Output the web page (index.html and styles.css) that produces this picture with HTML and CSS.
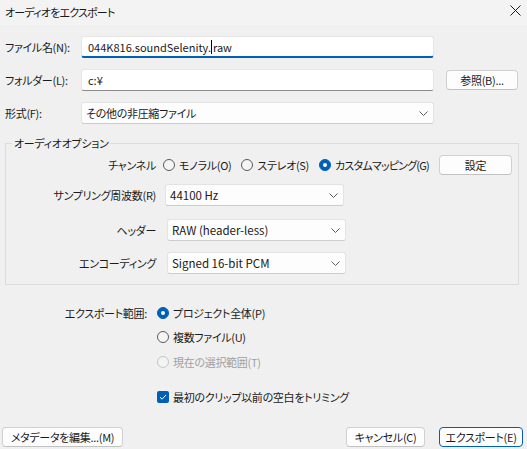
FILE: index.html
```html
<!DOCTYPE html>
<html lang="ja">
<head>
<meta charset="utf-8">
<title>オーディオをエクスポート</title>
<link rel="stylesheet" href="styles.css">
</head>
<body>
<div class="titlebar">
  <span class="title">オーディオをエクスポート</span>
  <svg class="close" width="11" height="11" viewBox="0 0 11 11"><path d="M0.5 0.5 L10.5 10.5 M10.5 0.5 L0.5 10.5" stroke="#1a1a1a" stroke-width="1" fill="none"/></svg>
</div>
<div class="main">
  <div class="row">
    <span class="lbl">ファイル名(N):</span>
    <div class="input focus">044K816.soundSelenity.<span class="caret"></span>raw</div>
  </div>
  <div class="row">
    <span class="lbl">フォルダー(L):</span>
    <div class="input">c:¥</div>
    <div class="btn browse">参照(B)...</div>
  </div>
  <div class="row">
    <span class="lbl">形式(F):</span>
    <div class="select wide"><span>その他の非圧縮ファイル</span><svg class="chev" width="9" height="5" viewBox="0 0 9 5"><path d="M0.5 0.5 L4.5 4.5 L8.5 0.5" stroke="#5c5c5c" fill="none"/></svg></div>
  </div>

  <fieldset class="group">
    <legend>オーディオオプション</legend>
    <div class="frow channel">
      <span class="flbl">チャンネル</span>
      <div class="radios">
        <span class="ritem"><span class="radio"></span>モノラル(O)</span>
        <span class="ritem"><span class="radio"></span>ステレオ(S)</span>
        <span class="ritem custom"><span class="radio on"></span>カスタムマッピング(G)</span>
      </div>
      <div class="btn settings">設定</div>
    </div>
    <div class="frow sr">
      <span class="flbl">サンプリング周波数(R)</span>
      <div class="select mid"><span class="val">44100 Hz</span><svg class="chev" width="9" height="5" viewBox="0 0 9 5"><path d="M0.5 0.5 L4.5 4.5 L8.5 0.5" stroke="#5c5c5c" fill="none"/></svg></div>
    </div>
    <div class="frow hd">
      <span class="flbl">ヘッダー</span>
      <div class="select mid"><span class="val">RAW (header-less)</span><svg class="chev" width="9" height="5" viewBox="0 0 9 5"><path d="M0.5 0.5 L4.5 4.5 L8.5 0.5" stroke="#5c5c5c" fill="none"/></svg></div>
    </div>
    <div class="frow enc">
      <span class="flbl">エンコーディング</span>
      <div class="select mid"><span class="val">Signed 16-bit PCM</span><svg class="chev" width="9" height="5" viewBox="0 0 9 5"><path d="M0.5 0.5 L4.5 4.5 L8.5 0.5" stroke="#5c5c5c" fill="none"/></svg></div>
    </div>
  </fieldset>

  <div class="export">
    <span class="elbl">エクスポート範囲:</span>
    <div class="eitems">
      <span class="ritem e1"><span class="radio on"></span>プロジェクト全体(P)</span>
      <span class="ritem e2"><span class="radio"></span>複数ファイル(U)</span>
      <span class="ritem e3 disabled"><span class="radio"></span>現在の選択範囲(T)</span>
      <span class="ritem e4"><span class="check"><svg width="12" height="12" viewBox="0 0 12 12"><path d="M3 6.2 L5.1 8.2 L9 4" stroke="#fff" stroke-width="1" fill="none"/></svg></span>最初のクリップ以前の空白をトリミング</span>
    </div>
  </div>
</div>
<div class="footer">
  <div class="btn meta">メタデータを編集...(M)</div>
  <div class="btn cancel">キャンセル(C)</div>
  <div class="btn export-btn">エクスポート(E)</div>
</div>
</body>
</html>
```

FILE: styles.css
```css
* { box-sizing: border-box; }
html, body { margin: 0; padding: 0; }
body {
  width: 527px;
  height: 449px;
  overflow: hidden;
  background: #f0f0f0;
  font-family: "Noto Sans CJK JP", sans-serif;
  font-size: 11px;
  line-height: 16px;
  letter-spacing: -0.3px;
  color: #1a1a1a;
  font-feature-settings: "palt";
}
.titlebar {
  height: 25px;
  background: #f3f3f3;
  display: flex;
  align-items: center;
  justify-content: space-between;
  padding: 0 6px 2px 5px;
}
.title { letter-spacing: -0.8px; }
.close { display: block; margin-top: -2px; }
.main { padding: 11px 8px 0 5px; }
.row { display: flex; align-items: center; height: 22px; }
.row + .row { margin-top: 11px; }
.lbl { width: 76px; flex: none; }
.input {
  width: 353px;
  height: 22px;
  background: #fff;
  border: 1px solid #e6e6e6;
  border-bottom-color: #8a8a8a;
  border-radius: 3px;
  padding: 0 6px;
  display: flex;
  align-items: center;
  font-size: 11px;
  letter-spacing: 0;
}
.input.focus { border-bottom: 2px solid #005fb8; padding-top: 1px; }
.caret { display: inline-block; width: 1px; height: 14px; background: #000; margin: 0 1px 0 0; }
.select {
  height: 22px;
  background: #fdfdfd;
  border: 1px solid #e3e3e3;
  border-bottom-color: #cccccc;
  border-radius: 3px;
  padding: 0 5px 0 4px;
  display: flex;
  align-items: center;
  justify-content: space-between;
  flex: none;
}
.select .val { font-size: 11.5px; letter-spacing: 0; }
.select.wide { width: 353px; }
.select.mid { width: 179px; }
.chev { display: block; }
.btn {
  height: 20px;
  background: #fdfdfd;
  border: 1px solid #d0d0d0;
  border-bottom-color: #c2c2c2;
  border-radius: 4px;
  display: flex;
  align-items: center;
  justify-content: center;
  flex: none;
}
.browse { width: 72px; margin-left: 12px; }

.group {
  margin: 11px 0 0 0;
  border: 1px solid #dcdcdc;
  padding: 4px 0 10px 0;
  min-width: 0;
}
.group legend { padding: 0 2px; margin-left: 6px; line-height: 16px; }
.frow { display: flex; align-items: center; }
.flbl { width: 150px; text-align: right; flex: none; }
.channel { height: 20px; }
.radios { display: flex; margin-left: 7px; gap: 10px; min-width: 0; }
.ritem { display: flex; align-items: center; height: 16px; white-space: nowrap; }
.custom { letter-spacing: -0.8px; }
.radio {
  width: 12px;
  height: 12px;
  border-radius: 50%;
  border: 1px solid #5a5a5a;
  background: #f5f5f5;
  margin-right: 4px;
  flex: none;
  position: relative;
}
.radio.on { background: #005fb8; border-color: #005fb8; }
.radio.on::after {
  content: "";
  position: absolute;
  left: 3px; top: 3px;
  width: 4px; height: 4px;
  border-radius: 50%;
  background: #fff;
}
.settings { width: 73px; margin-left: auto; margin-right: 6px; }
.sr { margin-top: 9px; }
.sr .select { margin-left: 9px; }
.hd { margin-top: 13px; }
.hd .select, .enc .select { margin-left: 11px; }
.enc { margin-top: 11px; }

.export { display: flex; margin-top: 20px; }
.elbl { width: 142px; text-align: right; flex: none; height: 16px; }
.eitems { display: flex; flex-direction: column; margin-left: 10px; }
.e2 { margin-top: 8px; }
.e3 { margin-top: 9px; }
.e4 { margin-top: 19px; }
.disabled { color: #a0a0a0; }
.disabled .radio { border-color: #c6c6c6; background: #f3f3f3; }
.check {
  width: 12px; height: 12px;
  border-radius: 2px;
  background: #005fb8;
  margin-right: 4px;
  display: block;
  flex: none;
}
.check svg { display: block; }

.footer { display: flex; margin-top: 22px; padding: 0 4px 0 2px; }
.meta { width: 121px; }
.cancel { width: 79px; margin-left: auto; }
.export-btn { width: 84px; margin-left: 14px; border-color: #005fb8; }
```
